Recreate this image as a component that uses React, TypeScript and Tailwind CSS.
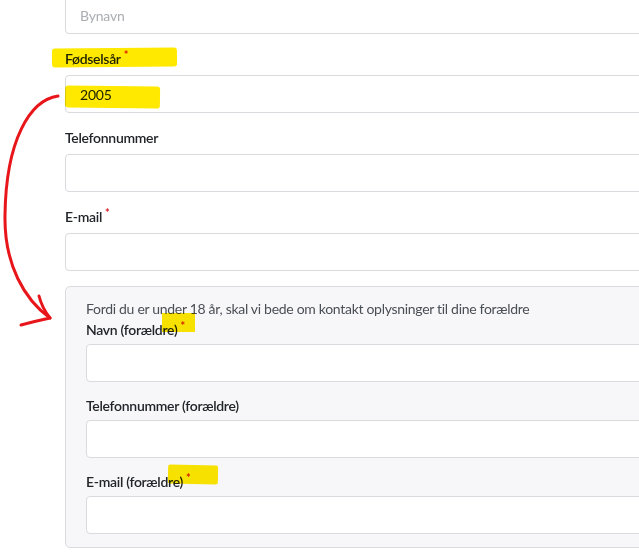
import React from "react";

function Label({ text, required, mb }: { text: string; required?: boolean; mb: string }) {
  return (
    <label className={"block text-[14px] leading-[20px] font-semibold text-[#212529] tracking-[-0.3px] " + mb}>
      {text}
      {required && (
        <span className="relative -top-[5px] ml-[3px] text-[11px] leading-none font-bold text-[#d9222a]">*</span>
      )}
    </label>
  );
}

function Input({ value, placeholder }: { value?: string; placeholder?: string }) {
  return (
    <div className="w-[700px] h-[38px] border border-[#d8dadd] rounded-[4px] bg-white flex items-center pl-[14px] text-[14px] tracking-[-0.2px]">
      {value ? (
        <span className="text-[#212529]">{value}</span>
      ) : (
        <span className="text-[#a9adb2]">{placeholder}</span>
      )}
    </div>
  );
}

function Field({
  label,
  required,
  value,
  inner,
  last,
}: {
  label: string;
  required?: boolean;
  value?: string;
  inner?: boolean;
  last?: boolean;
}) {
  return (
    <div className={last ? "" : inner ? "mb-[14px]" : "mb-[15px]"}>
      <Label text={label} required={required} mb={inner ? "mb-[4px]" : "mb-[6px]"} />
      <Input value={value} />
    </div>
  );
}

export default function App() {
  return (
    <div
      className="relative w-[639px] h-[556px] overflow-hidden bg-white"
      style={{ fontFamily: "Lato, 'Liberation Sans', sans-serif" }}
    >
      <div className="flex flex-col pl-[65px] mt-[-4px]">
        <div className="mb-[15px]">
          <Input placeholder="Bynavn" />
        </div>
        <Field label="Fødselsår" required value="2005" />
        <Field label="Telefonnummer" />
        <Field label="E-mail" required />
        <div className="w-[700px] border border-[#d9dbde] rounded-[5px] bg-[#f7f7f9] pl-[20px] pt-[12px] pb-[13px]">
          <p className="text-[14px] leading-[20px] text-[#4a4f55] mb-[1px] tracking-[-0.3px]">
            Fordi du er under 18 år, skal vi bede om kontakt oplysninger til dine forældre
          </p>
          <Field label="Navn (forældre)" required inner />
          <Field label="Telefonnummer (forældre)" inner />
          <Field label="E-mail (forældre)" required inner last />
        </div>
      </div>

      {/* marker highlights */}
      <div className="absolute left-[52px] top-[48px] w-[125px] h-[19px] bg-[#ffe900] mix-blend-multiply rounded-[3px] -rotate-[0.5deg]" />
      <div className="absolute left-[65px] top-[86px] w-[95px] h-[22px] bg-[#ffe900] mix-blend-multiply rounded-[3px] rotate-[0.8deg]" />
      <div className="absolute left-[162px] top-[313px] w-[33px] h-[19px] bg-[#ffe900] mix-blend-multiply" />
      <div className="absolute left-[168px] top-[465px] w-[50px] h-[19px] bg-[#ffe900] mix-blend-multiply rounded-[2px] rotate-[1deg]" />

      {/* red arrow */}
      <svg className="absolute left-0 top-0" width="639" height="556" viewBox="0 0 639 556" fill="none">
        <path
          d="M58 96 C 30 100, 6 140, 5 215 C 4 265, 25 300, 50 318"
          stroke="#e8161b"
          strokeWidth="3"
          strokeLinecap="round"
        />
        <path
          d="M39 296 Q 42 308 50 318 Q 36 321 21 325"
          stroke="#e8161b"
          strokeWidth="3"
          strokeLinecap="round"
          strokeLinejoin="round"
        />
      </svg>
    </div>
  );
}
